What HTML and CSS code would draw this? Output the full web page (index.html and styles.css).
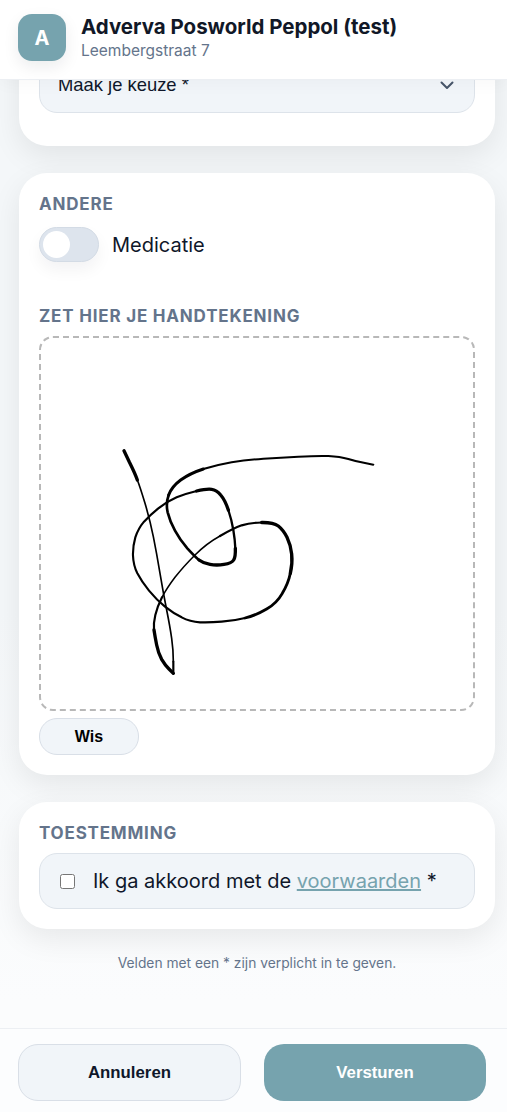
FILE: index.html
```html
<!DOCTYPE html>
<html lang="nl">
<head>
  <meta charset="UTF-8">
  <title>Adverva Posworld Peppol (test)</title>
  <link rel="stylesheet" href="styles.css">
</head>
<body>
  <header class="topbar">
    <div class="avatar">A</div>
    <div class="shop">
      <div class="shop-name">Adverva Posworld Peppol (test)</div>
      <div class="shop-address">Leembergstraat 7</div>
    </div>
  </header>

  <main class="content">
    <section class="card card-cut">
      <div class="select-box">
        <span>Maak je keuze *</span>
        <svg class="chevron" viewBox="0 0 16 16" width="16" height="16">
          <path d="M2.5 5.5 L8 11 L13.5 5.5" fill="none" stroke="#475569" stroke-width="2" stroke-linecap="round" stroke-linejoin="round"/>
        </svg>
      </div>
    </section>

    <section class="card">
      <div class="label">Andere</div>
      <div class="toggle-row">
        <span class="toggle"><span class="knob"></span></span>
        <span>Medicatie</span>
      </div>
      <div class="label label-sign">Zet hier je handtekening</div>
      <div class="sign-box">
        <!-- viewBox is 3x the box so the strokes can be read off a zoomed crop -->
        <svg class="signature" viewBox="-183 -282 1308 1125">
          <g fill="none" stroke="#000" stroke-linecap="round" stroke-linejoin="round">
            <path stroke-width="10" d="M72 62 L88 96 Q105 130 112 150"/>
            <path stroke-width="5" d="M112 150 Q120 170 135 220 Q150 270 160 320 Q170 370 180 430 Q190 490 200 540 Q210 590 215 625 Q220 660 220 695"/>
            <path stroke-width="6.5" d="M220 695 L220 730"/>
            <path stroke-width="10" d="M220 730 L207 717 Q195 705 185 688 Q175 670 170 645 Q165 620 162 600"/>
            <path stroke-width="6.5" d="M162 600 Q160 580 166 555 Q172 530 186 502"/>
            <path stroke-width="4.6" d="M186 502 Q200 475 225 442 Q250 410 285 375 Q320 340 360 318"/>
            <path stroke-width="6.6" d="M360 318 Q400 295 425 286 Q450 278 485 277.5"/>
            <path stroke-width="10" d="M485 277.5 Q520 277 535 288 Q550 300 561 322 Q572 345 575 372 Q578 400 571 430"/>
            <path stroke-width="8.5" d="M571 430 Q565 460 547 490 Q530 520 500 537 Q470 555 435 564"/>
            <path stroke-width="6.4" d="M435 564 Q400 573 365 575 Q330 578 300 577 Q270 575 245 562 Q220 550 195 530 Q170 510 147 482 Q125 455 112 430 Q100 405 99 377 Q98 350 106 322 Q115 295 132 275 Q150 255 175 235 Q200 215 230 202 Q260 190 290 183"/>
            <path stroke-width="10" d="M290 183 Q320 176 335 178 Q350 180 362 195 Q375 210 385 240"/>
            <path stroke-width="7" d="M385 240 Q395 270 400 300 Q405 330 406 355"/>
            <path stroke-width="10" d="M406 355 Q407 380 401 390 Q395 400 372 403 Q350 407 330 403 Q310 400 297 390"/>
            <path stroke-width="8" d="M297 390 Q285 380 262 355 Q240 330 225 302 Q210 275 203 247 Q197 220 206 195"/>
            <path stroke-width="9" d="M206 195 Q215 170 242 150 Q270 130 310 117"/>
            <path stroke-width="6" d="M310 117 Q350 105 395 97 Q440 90 490 86 Q540 83 595 80 Q650 77 685 78 Q720 80 745 87 Q770 95 795 99 L820 104"/>
          </g>
        </svg>
      </div>
      <button class="btn-clear" type="button">Wis</button>
    </section>

    <section class="card">
      <div class="label">Toestemming</div>
      <label class="consent">
        <input type="checkbox">
        <span>Ik ga akkoord met de <a href="#">voorwaarden</a> *</span>
      </label>
    </section>

    <p class="note">Velden met een * zijn verplicht in te geven.</p>
  </main>

  <footer class="bottombar">
    <button class="btn btn-cancel" type="button">Annuleren</button>
    <button class="btn btn-send" type="button">Versturen</button>
  </footer>
</body>
</html>
```

FILE: styles.css
```css
* { box-sizing: border-box; }
html, body { height: 100%; }
body {
  margin: 0;
  height: 1112px;
  display: flex;
  flex-direction: column;
  overflow: hidden;
  font-family: 'Inter', 'Noto Sans', sans-serif;
  color: #0f172a;
  background: linear-gradient(180deg, #f4f7f9 0%, #f4f7f9 55%, #fbfcfd 90%);
}

.topbar {
  flex: none;
  height: 80px;
  padding: 14px 18px 0;
  display: flex;
  gap: 15px;
  background: #fff;
  border-bottom: 1px solid #eceff3;
  box-shadow: 0 4px 16px rgba(15, 23, 42, 0.03);
  position: relative;
  z-index: 2;
}
.avatar {
  width: 48px;
  height: 47px;
  border-radius: 14px;
  background: #76a3ae;
  color: #fff;
  font-size: 20px;
  font-weight: 700;
  display: flex;
  align-items: center;
  justify-content: center;
  box-shadow: 0 6px 16px rgba(15, 23, 42, 0.08);
}
.shop-name { font-size: 20.48px; font-weight: 700; line-height: 26px; color: #111827; }
.shop-address { font-size: 15.5px; line-height: 20px; margin-top: 1px; color: #64748b; }

.content {
  flex: 1;
  min-height: 0;
  overflow: hidden;
  padding: 0 12px 0 19px;
}
.card {
  background: #fff;
  border-radius: 28px;
  padding: 21px 20px 20px;
  margin-bottom: 27px;
  box-shadow: 0 10px 30px rgba(0, 0, 0, 0.08);
}
.card-cut {
  margin-top: -83px;
  padding: 60px 20px 33px;
}
.select-box {
  height: 56px;
  padding: 0 19px 0 18px;
  display: flex;
  align-items: center;
  justify-content: space-between;
  background: #f1f5f9;
  border: 1px solid #dde3ea;
  border-radius: 18px;
  font-family: 'Liberation Sans', sans-serif;
  font-size: 18.4px;
}
.chevron { display: block; }

.label {
  font-size: 17px;
  font-weight: 700;
  line-height: 20px;
  letter-spacing: 0.8px;
  text-transform: uppercase;
  color: #64748b;
}
.label-sign { margin-top: 44px; }

.toggle-row {
  margin-top: 13px;
  display: flex;
  align-items: center;
  gap: 13px;
  font-size: 20px;
}
.toggle {
  width: 60px;
  height: 35px;
  padding: 3px;
  border-radius: 18px;
  background: #dde4ed;
  border: 1px solid #d3dbe5;
  box-shadow: 0 8px 16px rgba(15, 23, 42, 0.05);
}
.knob {
  display: block;
  width: 27px;
  height: 27px;
  border-radius: 50%;
  background: #fff;
}

.sign-box {
  margin-top: 10px;
  height: 375px;
  border: 2px dashed #b8b8b8;
  border-radius: 14px;
  background: #fff;
}
.signature { display: block; width: 436px; height: 375px; margin: -2px; }

.btn-clear {
  display: block;
  margin-top: 7px;
  width: 100px;
  height: 37px;
  background: #f1f5f9;
  border: 1px solid #d9dfe7;
  border-radius: 18px;
  font-family: 'Liberation Sans', sans-serif;
  font-size: 16px;
  font-weight: 700;
  color: #000;
}

.consent {
  margin-top: 10px;
  height: 56px;
  padding: 0 20px;
  display: flex;
  align-items: center;
  gap: 18px;
  background: #f1f5f9;
  border: 1px solid #dde3ea;
  border-radius: 18px;
  font-size: 20px;
}
.consent input { width: 15px; height: 15px; margin: 0; flex: none; }
.consent a { color: #76a3ae; }

.note {
  margin: -2px 0 0;
  text-align: center;
  font-size: 13.8px;
  line-height: 18px;
  color: #64748b;
}

.bottombar {
  flex: none;
  height: 84px;
  padding: 15px 21px 12px 18px;
  display: flex;
  gap: 23px;
  background: #fcfdfe;
  border-top: 1px solid #eceff3;
}
.btn {
  flex: 1;
  height: 57px;
  border-radius: 20px;
  font-family: 'Liberation Sans', sans-serif;
  font-size: 16.8px;
  font-weight: 700;
}
.btn-cancel { flex: 0 0 223px; background: #f1f5f9; border: 1px solid #d9dfe7; color: #0f172a; }
.btn-send { background: #76a3ae; border: 0; color: #fff; }
```
